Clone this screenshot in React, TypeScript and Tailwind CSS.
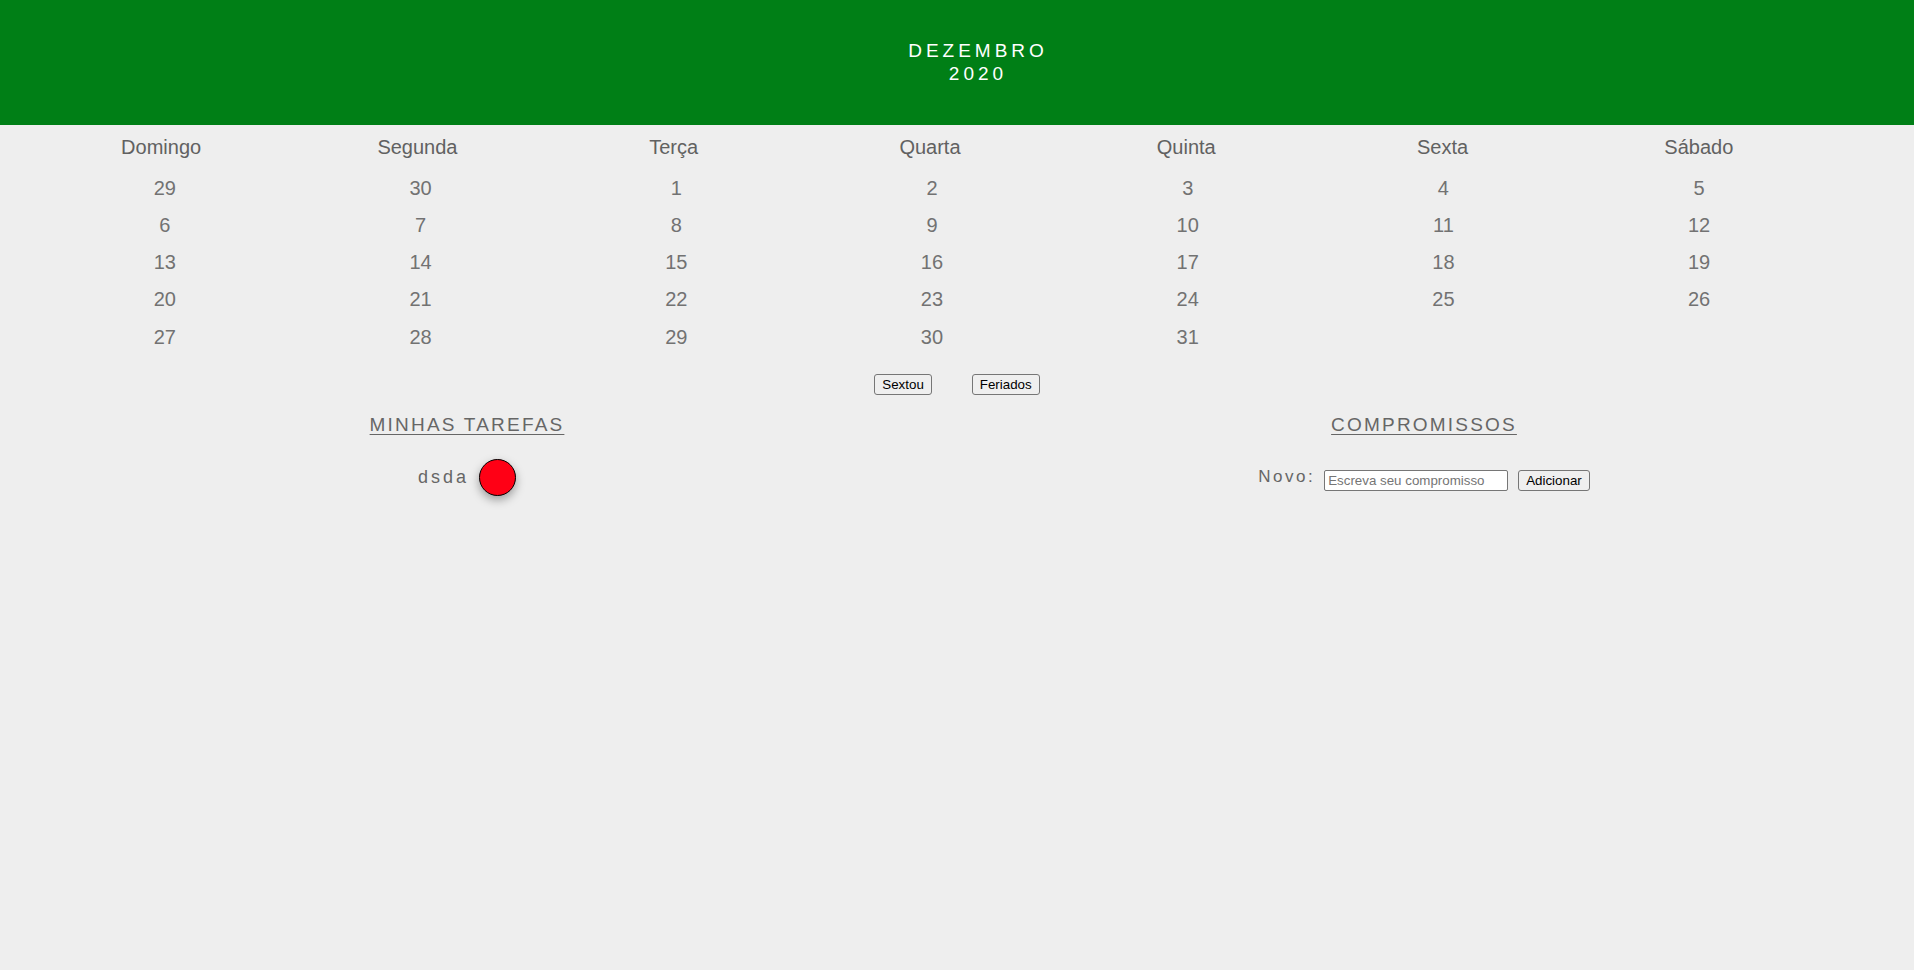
import React from "react";

const dias = ["Domingo", "Segunda", "Terça", "Quarta", "Quinta", "Sexta", "Sábado"];

const semanas: (number | null)[][] = [
  [29, 30, 1, 2, 3, 4, 5],
  [6, 7, 8, 9, 10, 11, 12],
  [13, 14, 15, 16, 17, 18, 19],
  [20, 21, 22, 23, 24, 25, 26],
  [27, 28, 29, 30, 31, null, null],
];

const btn =
  "bg-[#efefef] border border-[#767676] rounded-[3px] px-[7px] h-[21px] text-[13.33px] leading-[15px] text-black";

export default function App() {
  return (
    <div
      className="min-h-screen bg-[#eeeeee]"
      style={{ fontFamily: '"Liberation Sans", Arial, sans-serif' }}
    >
      {/* cabeçalho do mês */}
      <header className="h-[125px] bg-[#007f16] flex flex-col items-center justify-center pl-[42px] pb-[2px] text-white text-[19px] leading-[23px] tracking-[4px]">
        <span>DEZEMBRO</span>
        <span>2020</span>
      </header>

      {/* dias da semana */}
      <div className="ml-[33px] w-[1794px] grid grid-cols-7 text-center mt-[11px] text-[20px] leading-[23px] text-[#616161]">
        {dias.map((d) => (
          <div key={d}>{d}</div>
        ))}
      </div>

      {/* números */}
      <div className="ml-[37px] w-[1790px] mt-[10px] text-[20px] text-[#727272]">
        {semanas.map((s, i) => (
          <div key={i} className="grid grid-cols-7 text-center h-[37.25px] items-center">
            {s.map((n, j) => (
              <div key={j}>{n ?? ""}</div>
            ))}
          </div>
        ))}
      </div>

      <div className="flex justify-center gap-[40px] mt-[19px]">
        <button className={btn}>Sextou</button>
        <button className={btn}>Feriados</button>
      </div>

      <div className="flex mt-[16px]">
        <section className="w-1/2 pr-[23px] flex flex-col items-center">
          <h3 className="text-[19px] tracking-[2.2px] underline underline-offset-[3px] text-[#666666]">
            MINHAS TAREFAS
          </h3>
          <div className="flex items-center mt-[19px]">
            <span className="text-[18px] tracking-[3px] text-[#666666]">dsda</span>
            <span className="ml-[10px] w-[37px] h-[37px] rounded-full bg-[#ff0015] border border-black shadow-[0_4px_10px_rgba(0,0,0,0.35)]" />
          </div>
        </section>

        <section className="w-1/2 pr-[23px] flex flex-col items-center">
          <h3 className="text-[19px] tracking-[2.2px] underline underline-offset-[3px] text-[#666666]">
            COMPROMISSOS
          </h3>
          <div className="flex items-start mt-[25px]">
            <span className="mt-[2px] text-[17px] tracking-[2.5px] text-[#666666] leading-[20px]">Novo:</span>
            <input
              type="text"
              placeholder="Escreva seu compromisso"
              className="ml-[9px] mt-[5px] w-[184px] h-[21px] bg-white border border-[#767676] rounded-[2px] px-[3px] text-[13.33px] placeholder:text-[#757575] outline-none"
            />
            <button className={btn + " ml-[10px] mt-[5px]"}>Adicionar</button>
          </div>
        </section>
      </div>
    </div>
  );
}
